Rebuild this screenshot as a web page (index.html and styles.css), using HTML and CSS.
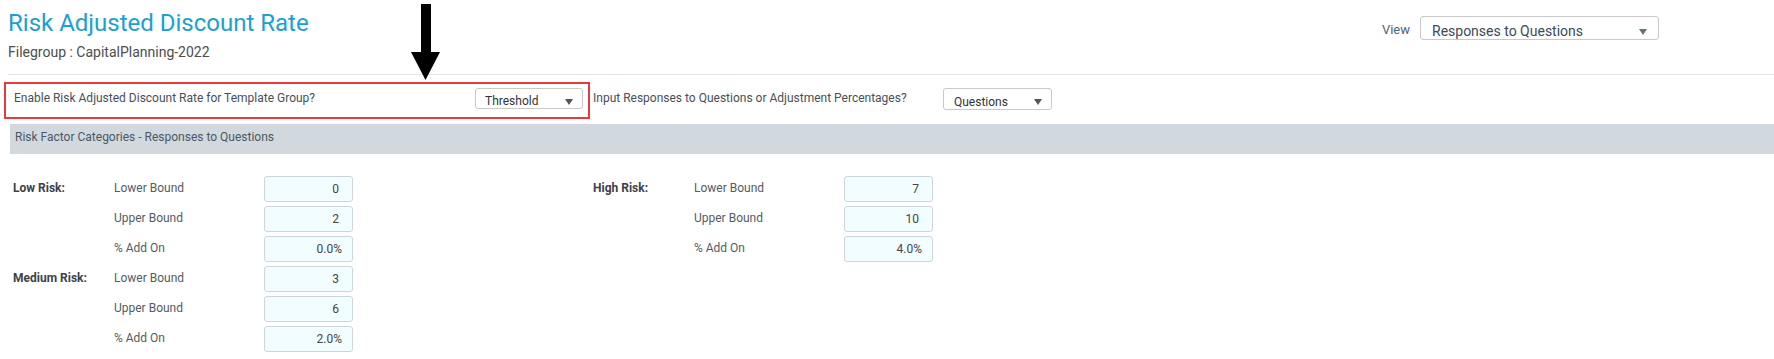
FILE: index.html
```html
<!DOCTYPE html>
<html lang="en">
<head>
    <meta charset="UTF-8">
    <title>Risk Adjusted Discount Rate</title>
    <link rel="stylesheet" href="styles.css">
</head>
<body>
<div class="page">
    <div class="header">
        <div class="titles">
            <h1 class="title">Risk Adjusted Discount Rate</h1>
            <div class="filegroup">Filegroup : CapitalPlanning-2022</div>
        </div>
        <div class="view">
            <span class="view-label">View</span>
            <div class="dropdown dropdown-view">
                <span>Responses to Questions</span>
                <span class="caret caret-slate"></span>
            </div>
        </div>
    </div>
    <div class="separator"></div>

    <div class="options">
        <div class="highlight">
            <span class="option-label">Enable Risk Adjusted Discount Rate for Template Group?</span>
            <div class="dropdown dropdown-small">
                <span>Threshold</span>
                <span class="caret"></span>
            </div>
        </div>
        <span class="option-label option-second">Input Responses to Questions or Adjustment Percentages?</span>
        <div class="dropdown dropdown-small dropdown-questions">
            <span>Questions</span>
            <span class="caret"></span>
        </div>
    </div>

    <div class="section-bar">Risk Factor Categories - Responses to Questions</div>

    <div class="risk-grid">
        <div class="risk-col">
            <div class="risk-group">
                <div class="risk-name">Low Risk:</div>
                <div class="bound">Lower Bound</div>
                <input class="num num-int" type="text" value="0" readonly>
                <div></div>
                <div class="bound">Upper Bound</div>
                <input class="num num-int" type="text" value="2" readonly>
                <div></div>
                <div class="bound">% Add On</div>
                <input class="num num-pct" type="text" value="0.0%" readonly>
            </div>
            <div class="risk-group">
                <div class="risk-name">Medium Risk:</div>
                <div class="bound">Lower Bound</div>
                <input class="num num-int" type="text" value="3" readonly>
                <div></div>
                <div class="bound">Upper Bound</div>
                <input class="num num-int" type="text" value="6" readonly>
                <div></div>
                <div class="bound">% Add On</div>
                <input class="num num-pct" type="text" value="2.0%" readonly>
            </div>
        </div>
        <div class="risk-col">
            <div class="risk-group">
                <div class="risk-name">High Risk:</div>
                <div class="bound">Lower Bound</div>
                <input class="num num-int" type="text" value="7" readonly>
                <div></div>
                <div class="bound">Upper Bound</div>
                <input class="num num-int" type="text" value="10" readonly>
                <div></div>
                <div class="bound">% Add On</div>
                <input class="num num-pct" type="text" value="4.0%" readonly>
            </div>
        </div>
    </div>

    <svg class="pointer" width="30" height="76" viewBox="0 0 30 76">
        <rect x="10" y="0" width="10" height="49" fill="#000"/>
        <polygon points="0,48 29,48 14.5,76" fill="#000"/>
    </svg>
</div>
</body>
</html>
```

FILE: styles.css
```css
body {
    margin: 0;
    background-color: #FFFFFF;
    font-family: Roboto, "Noto Sans", sans-serif;
    color: #555555;
}
.page {
    position: relative;
    padding: 8px 0 0 8px;
}
.header {
    display: flex;
    justify-content: space-between;
    align-items: flex-start;
    padding-right: 115px;
}
.title {
    margin: 0;
    font-size: 24px;
    font-weight: 400;
    line-height: 30px;
    color: #1ba1d1;
}
.filegroup {
    margin-top: 5px;
    font-size: 14px;
    line-height: 18px;
    color: #4d4d4d;
}
.view {
    display: flex;
    align-items: flex-start;
    margin-top: 8px;
}
.view-label {
    margin: 6px 10px 0 0;
    font-size: 13px;
    line-height: 16px;
    color: #4f6470;
}
.separator {
    height: 1px;
    margin-top: 13px;
    background-color: #e3e3e3;
}

.options {
    display: flex;
    align-items: flex-start;
    margin-top: 7px;
}
.highlight {
    display: flex;
    justify-content: space-between;
    align-items: flex-start;
    box-sizing: border-box;
    width: 586px;
    height: 37px;
    margin-left: -4px;
    padding: 4px 5px 0 8px;
    border: 2px solid #e8393f;
}
.option-label {
    margin-top: 2px;
    font-size: 12px;
    line-height: 16px;
    color: #4a4f55;
}
.option-second {
    width: 350px;
    margin: 8px 0 0 3px;
}
.dropdown {
    display: flex;
    justify-content: space-between;
    align-items: flex-start;
    box-sizing: border-box;
    border: 1px solid #c9c9c9;
    border-radius: 3px;
    background-color: #FFFFFF;
    color: #333333;
}
.dropdown-small {
    width: 108px;
    height: 21px;
    padding: 5px 9px 0 9px;
    font-size: 12px;
    line-height: 14px;
}
.dropdown-small .caret {
    margin-top: 5px;
}
.dropdown-questions {
    width: 109px;
    height: 22px;
    margin-top: 6px;
    padding: 6px 9px 0 10px;
}
.dropdown-questions .caret {
    margin-top: 4px;
}
.dropdown-view {
    width: 239px;
    height: 24px;
    padding: 6px 11px 0 11px;
    font-size: 14px;
    line-height: 16px;
    color: #3a4a55;
}
.dropdown-view .caret {
    margin-top: 6px;
}
.caret {
    width: 0;
    height: 0;
    border-left: 4px solid transparent;
    border-right: 4px solid transparent;
    border-top: 6px solid #555555;
}
.caret-slate {
    border-top-color: #5f7380;
}

.section-bar {
    height: 30px;
    box-sizing: border-box;
    margin: 5px 0 0 2px;
    padding: 0 0 4px 5px;
    background-color: #d1d9de;
    font-size: 12px;
    line-height: 26px;
    color: #4a5864;
}

.risk-grid {
    display: flex;
    gap: 240px;
    margin: 22px 0 0 5px;
}
.risk-col {
    display: flex;
    flex-direction: column;
    gap: 4px;
}
.risk-group {
    display: grid;
    grid-template-columns: 101px 150px 89px;
    grid-auto-rows: 26px;
    row-gap: 4px;
}
.risk-name {
    font-size: 12px;
    font-weight: 700;
    line-height: 24px;
    color: #3d4248;
}
.bound {
    font-size: 12px;
    line-height: 24px;
    color: #555b61;
}
.num {
    box-sizing: border-box;
    width: 89px;
    height: 26px;
    margin: 0;
    padding: 0;
    border: 1px solid #cdd6da;
    border-radius: 3px;
    background-color: #f2fdff;
    font-family: Roboto, "Noto Sans", sans-serif;
    font-size: 12px;
    color: #444444;
    text-align: right;
    outline: none;
}
.num-int {
    padding-right: 13px;
}
.num-pct {
    padding-right: 10px;
}

.pointer {
    position: absolute;
    left: 411px;
    top: 4px;
}
```
